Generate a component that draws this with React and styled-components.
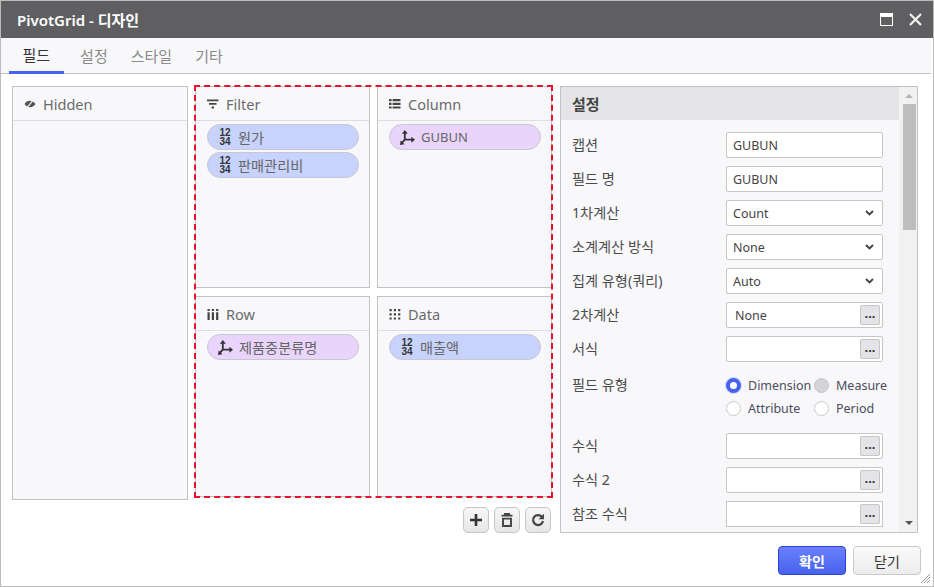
import React from "react";
import styled, { createGlobalStyle, css } from "styled-components";

const GlobalStyle = createGlobalStyle`
  html, body {
    margin: 0;
    padding: 0;
    background: #ffffff;
  }
  * {
    box-sizing: border-box;
  }
  body {
    font-family: "Noto Sans", "Noto Sans CJK KR", sans-serif;
    color: #444;
  }
`;

// ================= STYLES =================

const Window = styled.div`
  width: 934px;
  height: 587px;
  border: 1px solid #bcbcbc;
  background: #fff;
  display: flex;
  flex-direction: column;
  position: relative;
  overflow: hidden;
`;

const TitleBar = styled.div`
  height: 37px;
  flex: none;
  background: #5f5f61;
  color: #fff;
  display: flex;
  align-items: center;
  padding: 0 11px 0 16px;
  font-size: 15px;
  font-weight: 600;
`;

const TitleText = styled.span`
  flex: 1;
`;

const TitleActions = styled.div`
  display: flex;
  align-items: center;
  gap: 16px;
`;

const TabBar = styled.div`
  height: 36px;
  flex: none;
  margin-right: 2px;
  padding-left: 8px;
  display: flex;
  background: #f8f8fb;
  border-bottom: 1px solid #c2c2c2;
`;

const Tab = styled.div`
  height: 36px;
  display: flex;
  align-items: center;
  padding: 0 11.5px 2px;
  font-size: 15px;
  color: #8a8a8a;

  ${(props) =>
    props.$active &&
    css`
      padding: 0 13.5px 0;
      margin-right: 5px;
      color: #333;
      border-bottom: 3px solid #4763ee;
    `}
`;

const Body = styled.div`
  display: flex;
  align-items: flex-start;
  padding: 12px 0 0 11px;
`;

const Panel = styled.div`
  background: #f8f8fb;
  border: 1px solid #c2c2c2;
  display: flex;
  flex-direction: column;
`;

const HiddenPanel = styled(Panel)`
  width: 176px;
  height: 414px;
  margin-right: 6px;
`;

const PanelHeader = styled.div`
  height: 34px;
  flex: none;
  padding: 1px 11px 0;
  display: flex;
  align-items: center;
  gap: 7px;
  font-size: 14.5px;
  color: #6b6b6b;
  border-bottom: 1px solid #dedee2;
`;

const CenterColumn = styled.div`
  width: 359px;
  margin-top: -1px;
  margin-right: 7px;
  display: flex;
  flex-direction: column;
`;

const DropArea = styled.div`
  position: relative;
  height: 413px;
  padding: 1px 0 1px 1px;
  display: grid;
  grid-template-columns: 175px 175px;
  grid-template-rows: 202px 201px;
  column-gap: 7px;
  row-gap: 8px;

  &::after {
    content: "";
    position: absolute;
    inset: 0;
    border: 2px dashed #e8122d;
    pointer-events: none;
  }
`;

const ChipList = styled.div`
  padding: 3px 10px 0 11px;
  display: flex;
  flex-direction: column;
  gap: 2px;
`;

const Chip = styled.div`
  height: 26px;
  border-radius: 13px;
  border: 1px solid #c8c8d4;
  background: ${(props) => (props.$kind === "axis" ? "#e9d5fc" : "#c7d3fd")};
  display: flex;
  align-items: center;
  gap: 6px;
  padding-left: 10px;
  font-size: ${(props) => (props.$latin ? "13px" : "14.2px")};
  color: #666;
`;

const NumberIcon = styled.span`
  width: 14px;
  font-family: "Liberation Sans", sans-serif;
  font-size: 10px;
  line-height: 9px;
  font-weight: 700;
  color: #333;
  text-align: center;
`;

const Toolbar = styled.div`
  display: flex;
  justify-content: flex-end;
  gap: 5px;
  margin-top: 9px;
  padding-right: 2px;
`;

const ToolButton = styled.div`
  width: 26px;
  height: 26px;
  border: 1px solid #c6c6c6;
  border-radius: 5px;
  background: linear-gradient(#f6f6f6, #e6e6e6);
  display: flex;
  align-items: center;
  justify-content: center;
`;

const SettingsPanel = styled.div`
  width: 358px;
  height: 447px;
  background: #f8f8fb;
  border: 1px solid #c2c2c2;
  display: flex;
`;

const SettingsMain = styled.div`
  flex: 1;
  overflow: hidden;
`;

const SettingsHeader = styled.div`
  height: 33px;
  background: #e4e4e8;
  padding-left: 11px;
  display: flex;
  align-items: center;
  font-size: 15px;
  font-weight: 600;
  color: #444;
`;

const Form = styled.div`
  padding: 12px 16px 0 11px;
  display: flex;
  flex-direction: column;
  gap: 8px;
`;

const Row = styled.div`
  display: grid;
  grid-template-columns: 154px 157px;
  align-items: center;
  min-height: 26px;
`;

const RadioRow = styled(Row)`
  align-items: start;
  padding: 4px 0 5px;
`;

const Label = styled.div`
  font-size: 14.2px;
  line-height: 22px;
  color: #4c4c4c;
  white-space: nowrap;
`;

const Field = styled.div`
  height: 26px;
  background: #fff;
  border: 1px solid #c6c6c6;
  border-radius: ${(props) => (props.$square ? "0" : "2px")};
  display: flex;
  align-items: center;
  justify-content: space-between;
  padding: 0 ${(props) => (props.$select ? "8px" : "2px")} 0 ${(props) => (props.$offset ? "8px" : "6px")};
  font-size: 12.5px;
  color: #444;
`;

const DotsButton = styled.div`
  width: 20px;
  height: 20px;
  background: #e4e4e8;
  border: 1px solid #c6c6c6;
  border-radius: 2px;
  display: flex;
  align-items: center;
  justify-content: center;
  font-family: "Liberation Sans", sans-serif;
  font-size: 13px;
  font-weight: 700;
  line-height: 1;
  padding-bottom: 3px;
  color: #333;
`;

const RadioGrid = styled.div`
  display: grid;
  grid-template-columns: 88px 88px;
  grid-auto-rows: 23px;
`;

const RadioItem = styled.div`
  display: flex;
  align-items: center;
  gap: 7px;
  font-size: 12.5px;
  color: #4c4c5c;
  white-space: nowrap;
`;

const RadioMark = styled.span`
  width: 15px;
  height: 15px;
  flex: none;
  border-radius: 50%;
  border: 1px solid #c8c8c8;
  background: #fff;

  ${(props) =>
    props.$state === "checked" &&
    css`
      border: 4px solid #4763ee;
      box-shadow: 0 0 0 1px #cfd5f7;
    `}

  ${(props) =>
    props.$state === "muted" &&
    css`
      background: #d3d3d8;
    `}
`;

const Scrollbar = styled.div`
  width: 18px;
  flex: none;
  background: #f1f1f1;
  display: flex;
  flex-direction: column;
  align-items: center;
  padding: 7px 1px 7px 3px;
`;

const ScrollThumb = styled.div`
  width: 13px;
  height: 126px;
  margin-top: 6px;
  background: #bdbdbd;
  flex: none;
`;

const ScrollSpacer = styled.div`
  flex: 1;
`;

const ArrowUp = styled.div`
  width: 0;
  height: 0;
  border-left: 4px solid transparent;
  border-right: 4px solid transparent;
  border-bottom: 4px solid ${(props) => props.$color};
`;

const ArrowDown = styled.div`
  width: 0;
  height: 0;
  border-left: 4px solid transparent;
  border-right: 4px solid transparent;
  border-top: 4px solid ${(props) => props.$color};
`;

const Footer = styled.div`
  display: flex;
  justify-content: flex-end;
  gap: 7px;
  margin-top: 13px;
  padding-right: 12px;
`;

const FooterButton = styled.div`
  width: 68px;
  height: 29px;
  border-radius: 4px;
  display: flex;
  align-items: center;
  justify-content: center;
  font-size: 14px;
  border: 1px solid #c9c9c9;
  background: linear-gradient(#fafafa, #ececec);
  color: #333;

  ${(props) =>
    props.$primary &&
    css`
      border-color: #2a44cc;
      background: linear-gradient(#6a80fb, #4763ee);
      color: #fff;
      font-weight: 600;
    `}
`;

const ResizeGrip = styled.svg`
  position: absolute;
  right: 3px;
  bottom: 3px;
`;

// ================= ICONS =================

const MaximizeIcon = () => (
  <svg width="13" height="13" viewBox="0 0 13 13">
    <rect x="0" y="0" width="13" height="13" fill="#fff" />
    <rect x="1" y="4" width="11" height="8" fill="#5f5f61" />
  </svg>
);

const CloseIcon = () => (
  <svg width="13" height="13" viewBox="0 0 13 13">
    <path d="M1 1 L12 12 M12 1 L1 12" stroke="#f2f2f2" strokeWidth="2.2" />
  </svg>
);

const EyeSlashIcon = () => (
  <svg width="12" height="10" viewBox="0 0 12 10">
    <path d="M0.5 5 C2.5 1.2 8 0.2 11.5 5 C9.5 8.8 4 9.8 0.5 5 Z" fill="#555" />
    <path d="M2.4 9.4 L9.6 0.6" stroke="#f8f8fb" strokeWidth="1.1" />
  </svg>
);

const FilterIcon = () => (
  <svg width="12" height="10" viewBox="0 0 12 10">
    <path d="M0 0.5H11.5V2.3H0Z M2 4H9.5V5.8H2Z M4.6 7.6H7V9.6H4.6Z" fill="#444" />
  </svg>
);

const ColumnIcon = () => (
  <svg width="12" height="10" viewBox="0 0 12 10">
    <path d="M0 0H2.6V2.2H0Z M3.6 0H11.5V2.2H3.6Z M0 3.7H2.6V5.9H0Z M3.6 3.7H11.5V5.9H3.6Z M0 7.4H2.6V9.6H0Z M3.6 7.4H11.5V9.6H3.6Z" fill="#444" />
  </svg>
);

const RowIcon = () => (
  <svg width="12" height="11" viewBox="0 0 12 11">
    <path d="M0.5 0H2.7V2H0.5Z M0.5 3.2H2.7V11H0.5Z M4.8 0H7V2H4.8Z M4.8 3.2H7V11H4.8Z M9.1 0H11.3V2H9.1Z M9.1 3.2H11.3V11H9.1Z" fill="#444" />
  </svg>
);

const DataIcon = () => (
  <svg width="12" height="11" viewBox="0 0 12 11">
    <path d="M0.5 0H2.7V2.2H0.5Z M4.8 0H7V2.2H4.8Z M9.1 0H11.3V2.2H9.1Z M0.5 4.2H2.7V6.4H0.5Z M4.8 4.2H7V6.4H4.8Z M9.1 4.2H11.3V6.4H9.1Z M0.5 8.4H2.7V10.6H0.5Z M4.8 8.4H7V10.6H4.8Z M9.1 8.4H11.3V10.6H9.1Z" fill="#444" />
  </svg>
);

const AxisIcon = () => (
  <svg width="15" height="15" viewBox="0 0 14 14">
    <path d="M4.5 2V9M4.5 9H11.5M4.5 9L1.5 12.2" stroke="#333" strokeWidth="1.7" fill="none" />
    <path d="M4.5 0L7.3 3.4H1.7Z M14 9L10.6 6.2V11.8Z M0 14L0.6 9.8L4.2 13.4Z" fill="#333" />
  </svg>
);

const PlusIcon = () => (
  <svg width="14" height="14" viewBox="0 0 14 14">
    <path d="M7 1V13M1 7H13" stroke="#333" strokeWidth="2.6" />
  </svg>
);

const TrashIcon = () => (
  <svg width="12" height="14" viewBox="0 0 12 14">
    <path d="M0.5 2.6H11.5M4 2.4V0.9H8V2.4M2 5.6H10V13H2Z" stroke="#444" strokeWidth="1.9" fill="none" />
  </svg>
);

const RefreshIcon = () => (
  <svg width="14" height="14" viewBox="0 0 14 14">
    <path d="M11.2 4.2A5 5 0 1 0 12 8" stroke="#444" strokeWidth="2.2" fill="none" />
    <path d="M13 0.8V6.2H7.6Z" fill="#444" />
  </svg>
);

const ChevronIcon = () => (
  <svg width="9" height="6" viewBox="0 0 9 6">
    <path d="M1 1L4.5 4.5L8 1" stroke="#444" strokeWidth="1.9" fill="none" />
  </svg>
);

// ================= DATA =================

const zones = [
  { name: "Filter", icon: <FilterIcon />, chips: [{ kind: "number", text: "원가" }, { kind: "number", text: "판매관리비" }] },
  { name: "Column", icon: <ColumnIcon />, chips: [{ kind: "axis", text: "GUBUN", latin: true }] },
  { name: "Row", icon: <RowIcon />, chips: [{ kind: "axis", text: "제품중분류명" }] },
  { name: "Data", icon: <DataIcon />, chips: [{ kind: "number", text: "매출액" }] },
];

const radios = [
  { label: "Dimension", state: "checked" },
  { label: "Measure", state: "muted" },
  { label: "Attribute" },
  { label: "Period" },
];

// ================= COMPONENT =================

function App() {
  return (
    <>
      <GlobalStyle />
      <Window>
        <TitleBar>
          <TitleText>PivotGrid - 디자인</TitleText>
          <TitleActions>
            <MaximizeIcon />
            <CloseIcon />
          </TitleActions>
        </TitleBar>

        <TabBar>
          <Tab $active>필드</Tab>
          <Tab>설정</Tab>
          <Tab>스타일</Tab>
          <Tab>기타</Tab>
        </TabBar>

        <Body>
          <HiddenPanel>
            <PanelHeader>
              <EyeSlashIcon />
              Hidden
            </PanelHeader>
          </HiddenPanel>

          <CenterColumn>
            <DropArea>
              {zones.map((zone) => (
                <Panel key={zone.name}>
                  <PanelHeader>
                    {zone.icon}
                    {zone.name}
                  </PanelHeader>
                  <ChipList>
                    {zone.chips.map((chip) => (
                      <Chip key={chip.text} $kind={chip.kind} $latin={chip.latin}>
                        {chip.kind === "axis" ? <AxisIcon /> : <NumberIcon>12 34</NumberIcon>}
                        {chip.text}
                      </Chip>
                    ))}
                  </ChipList>
                </Panel>
              ))}
            </DropArea>
            <Toolbar>
              <ToolButton><PlusIcon /></ToolButton>
              <ToolButton><TrashIcon /></ToolButton>
              <ToolButton><RefreshIcon /></ToolButton>
            </Toolbar>
          </CenterColumn>

          <SettingsPanel>
            <SettingsMain>
              <SettingsHeader>설정</SettingsHeader>
              <Form>
                <Row><Label>캡션</Label><Field>GUBUN</Field></Row>
                <Row><Label>필드 명</Label><Field>GUBUN</Field></Row>
                <Row><Label>1차계산</Label><Field $select>Count<ChevronIcon /></Field></Row>
                <Row><Label>소계계산 방식</Label><Field $select>None<ChevronIcon /></Field></Row>
                <Row><Label>집계 유형(쿼리)</Label><Field $select>Auto<ChevronIcon /></Field></Row>
                <Row><Label>2차계산</Label><Field $offset>None<DotsButton>...</DotsButton></Field></Row>
                <Row><Label>서식</Label><Field><span /><DotsButton>...</DotsButton></Field></Row>
                <RadioRow>
                  <Label>필드 유형</Label>
                  <RadioGrid>
                    {radios.map((radio) => (
                      <RadioItem key={radio.label}>
                        <RadioMark $state={radio.state} />
                        {radio.label}
                      </RadioItem>
                    ))}
                  </RadioGrid>
                </RadioRow>
                <Row><Label>수식</Label><Field><span /><DotsButton>...</DotsButton></Field></Row>
                <Row><Label>수식 2</Label><Field><span /><DotsButton>...</DotsButton></Field></Row>
                <Row><Label>참조 수식</Label><Field $square><span /><DotsButton>...</DotsButton></Field></Row>
              </Form>
            </SettingsMain>
            <Scrollbar>
              <ArrowUp $color="#b5b5b5" />
              <ScrollThumb />
              <ScrollSpacer />
              <ArrowDown $color="#555" />
            </Scrollbar>
          </SettingsPanel>
        </Body>

        <Footer>
          <FooterButton $primary>확인</FooterButton>
          <FooterButton>닫기</FooterButton>
        </Footer>

        <ResizeGrip width="9" height="9" viewBox="0 0 9 9">
          <path d="M0 9L9 0M3 9L9 3M6 9L9 6" stroke="#9a9a9a" strokeWidth="1" />
        </ResizeGrip>
      </Window>
    </>
  );
}

export default App;
